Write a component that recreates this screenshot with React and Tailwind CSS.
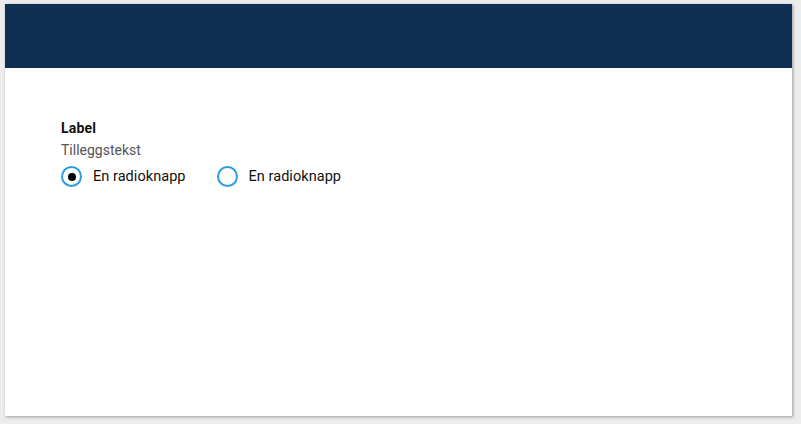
export default function App() {
  return (
    <div className="w-[801px] h-[424px] bg-[#ececec] pt-[4px] pl-[5px] font-['Roboto',sans-serif]">
      <div className="w-[787px] h-[412px] bg-white shadow-[1px_1px_3px_rgba(0,0,0,0.35)] flex flex-col">
        <div className="h-[64px] bg-[#0f2f52]" />
        <div className="pl-[56px] pt-[51px]">
          <div className="text-[14px] leading-[18px] font-bold text-[#111] tracking-[0.2px]">Label</div>
          <div className="text-[14px] leading-[18px] mt-[4px] text-[#555]">Tilleggstekst</div>
          <div className="flex items-center mt-[7px] gap-[31px]">
            <label className="flex items-center gap-[11px] cursor-pointer">
              <span className="w-[21px] h-[21px] rounded-full border-2 border-[#2f9be2] flex items-center justify-center">
                <span className="w-[8px] h-[8px] rounded-full bg-black" />
              </span>
              <span className="text-[14.5px] tracking-[0.05px] text-[#111]">En radioknapp</span>
            </label>
            <label className="flex items-center gap-[11px] cursor-pointer">
              <span className="w-[21px] h-[21px] rounded-full border-2 border-[#2f9be2]" />
              <span className="text-[14.5px] tracking-[0.05px] text-[#111]">En radioknapp</span>
            </label>
          </div>
        </div>
      </div>
    </div>
  );
}
